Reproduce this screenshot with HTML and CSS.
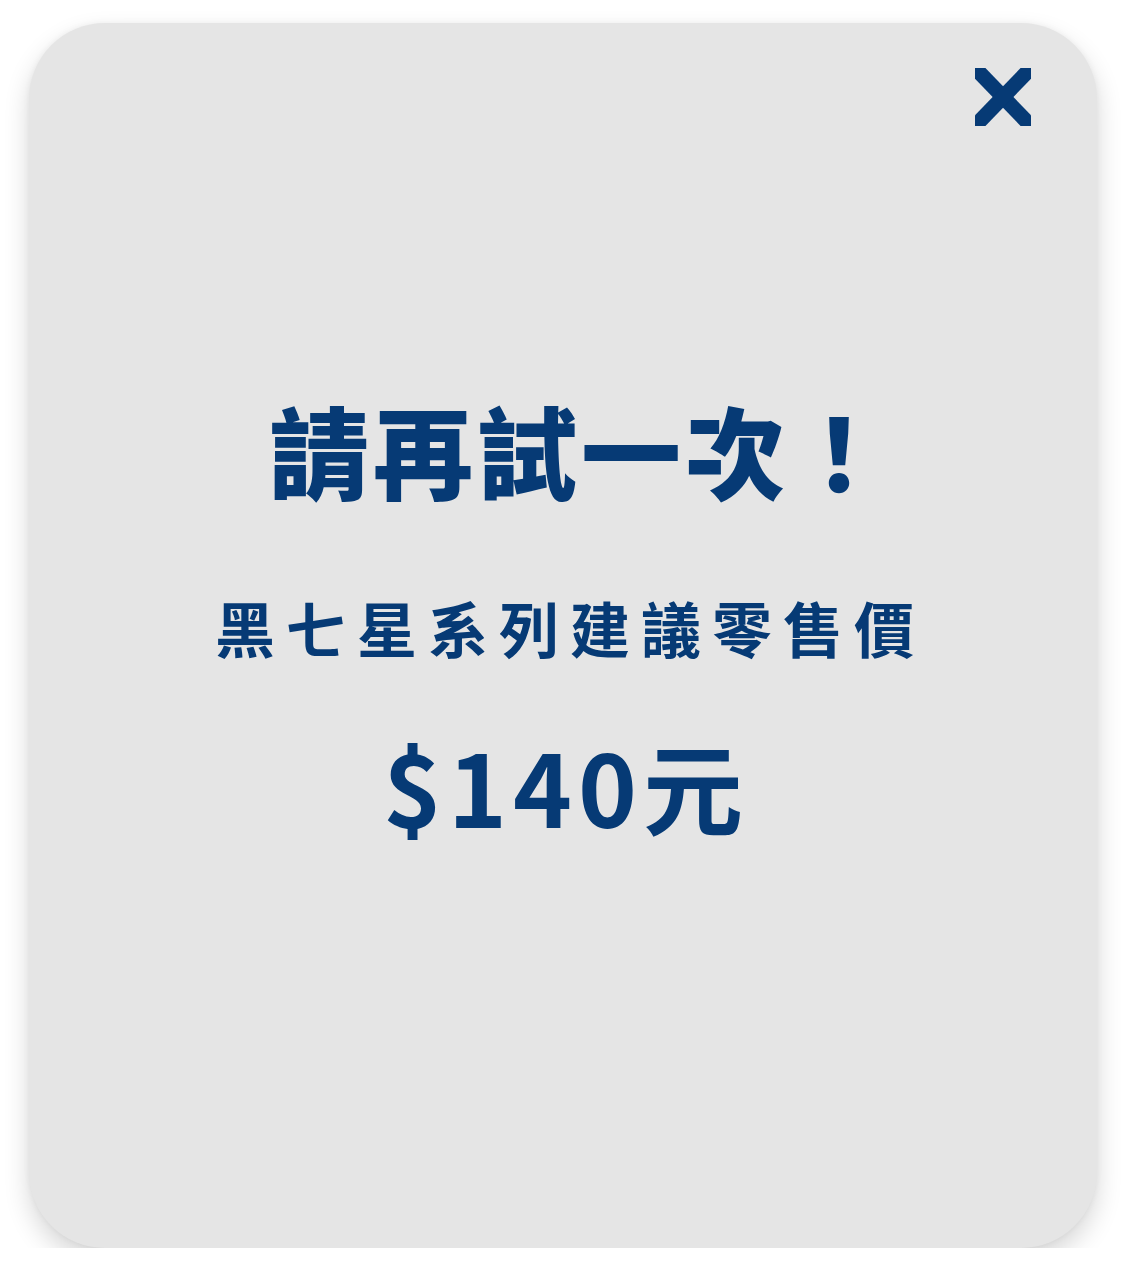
FILE: index.html
```html
<!DOCTYPE html>
<html lang="zh-Hant">
<head>
<meta charset="utf-8">
<link rel="stylesheet" href="styles.css">
</head>
<body>
<div class="card">
  <button class="close" aria-label="關閉">
    <svg viewBox="0 0 56 58" width="56" height="58"><line x1="0" y1="0" x2="56" y2="58"/><line x1="56" y1="0" x2="0" y2="58"/></svg>
  </button>
  <h1 class="title">請再試一次！</h1>
  <p class="subtitle">黑七星系列建議零售價</p>
  <p class="price">$140元</p>
</div>
</body>
</html>
```

FILE: styles.css
```css
html, body {
  margin: 0;
  padding: 0;
  background: #ffffff;
}
body {
  padding: 23px 0 0 29px;
  font-family: "Noto Sans CJK TC", "Noto Sans", sans-serif;
}
.card {
  position: relative;
  width: 1068px;
  height: 1225px;
  box-sizing: border-box;
  background: #e5e5e5;
  border-radius: 76px;
  box-shadow: 0 0 6px rgba(0, 0, 0, 0.05), 0 12px 26px rgba(0, 0, 0, 0.16);
  display: flex;
  flex-direction: column;
  align-items: center;
  padding-top: 376px;
  color: #063a75;
}
.close {
  position: absolute;
  top: 45px;
  right: 66px;
  width: 56px;
  height: 58px;
  padding: 0;
  border: 0;
  background: none;
}
.close svg {
  display: block;
}
.close line {
  stroke: #063a75;
  stroke-width: 15;
}
.title {
  margin: 0;
  font-size: 100px;
  line-height: 1;
  font-weight: 900;
  letter-spacing: 4px;
  padding-left: 36px;
}
.subtitle {
  margin: 98px 0 0;
  font-size: 60px;
  line-height: 1;
  font-weight: 700;
  letter-spacing: 11px;
  padding-left: 14px;
}
.price {
  margin: 78px 0 0;
  font-size: 100px;
  line-height: 1;
  font-weight: 700;
  letter-spacing: 6px;
  padding-left: 6px;
}
```
